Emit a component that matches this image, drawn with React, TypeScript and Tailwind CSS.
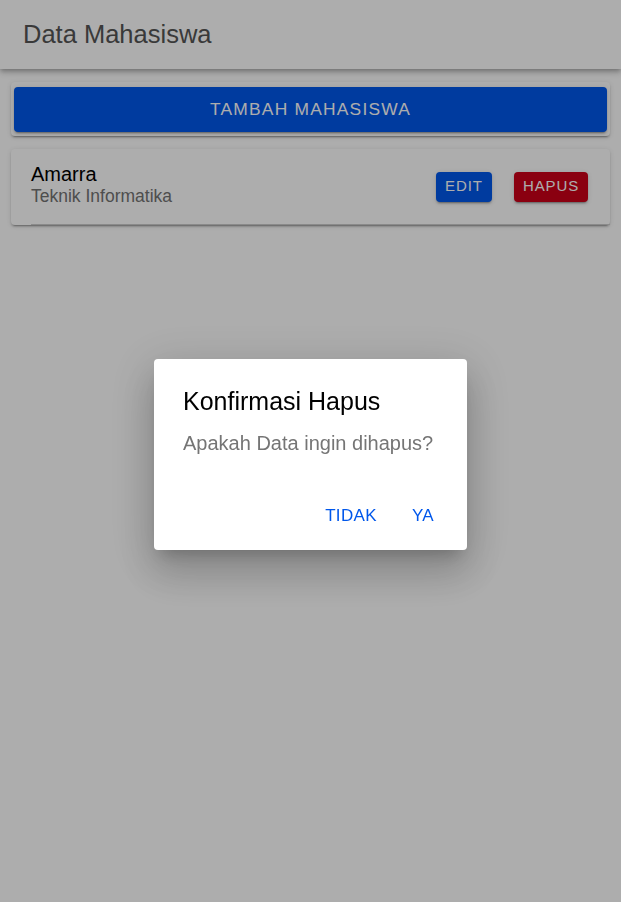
const font = { fontFamily: '"Liberation Sans", Arial, sans-serif' }

const App = () => {
  return (
    <div className="relative min-h-screen bg-white" style={font}>
      <header className="flex h-[69px] items-center bg-white pl-[23px] shadow-[0_2px_4px_-1px_rgba(0,0,0,0.2),0_4px_5px_0_rgba(0,0,0,0.14),0_1px_10px_0_rgba(0,0,0,0.12)]">
        <h1 className="text-[25.5px] text-[#555555]">Data Mahasiswa</h1>
      </header>

      <main className="flex flex-col gap-[13px] px-[11px] pt-[13px]">
        <div className="rounded-[4px] bg-white px-[3px] pb-[4px] pt-[5px] shadow-[0_3px_1px_-2px_rgba(0,0,0,0.2),0_2px_2px_0_rgba(0,0,0,0.14),0_1px_5px_0_rgba(0,0,0,0.12)]">
          <button className="h-[45px] w-full rounded-[4px] bg-[#0057eb] text-[17.4px] uppercase tracking-[0.07em] text-white shadow-[0_3px_1px_-2px_rgba(0,0,0,0.2),0_2px_2px_0_rgba(0,0,0,0.14),0_1px_5px_0_rgba(0,0,0,0.12)]">
            Tambah Mahasiswa
          </button>
        </div>

        <div className="rounded-[4px] bg-white shadow-[0_3px_1px_-2px_rgba(0,0,0,0.2),0_2px_2px_0_rgba(0,0,0,0.14),0_1px_5px_0_rgba(0,0,0,0.12)]">
          <div className="flex h-[76px] items-center pl-[20px]">
            <div className="flex h-full flex-1 items-center border-b border-[#cccccc] pr-[22px]">
              <div className="flex-1 pb-[4px]">
                <div className="text-[20px] leading-[23px] text-black">Amarra</div>
                <div className="text-[17.5px] leading-[21px] text-[#737373]">Teknik Informatika</div>
              </div>
              <div className="flex gap-[22px]">
                <button className="h-[30px] w-[56px] rounded-[4px] bg-[#0057eb] text-[15px] tracking-[0.06em] text-white shadow-[0_3px_1px_-2px_rgba(0,0,0,0.2),0_2px_2px_0_rgba(0,0,0,0.14),0_1px_5px_0_rgba(0,0,0,0.12)]">
                  EDIT
                </button>
                <button className="h-[30px] w-[74px] rounded-[4px] bg-[#cc0018] text-[15px] tracking-[0.06em] text-white shadow-[0_3px_1px_-2px_rgba(0,0,0,0.2),0_2px_2px_0_rgba(0,0,0,0.14),0_1px_5px_0_rgba(0,0,0,0.12)]">
                  HAPUS
                </button>
              </div>
            </div>
          </div>
        </div>
      </main>

      {/* backdrop + alert */}
      <div className="fixed inset-0 flex items-center justify-center bg-black/[0.32] pt-[7px]">
        <div className="w-[313px] rounded-[4px] bg-white shadow-[0_11px_15px_-7px_rgba(0,0,0,0.2),0_24px_38px_3px_rgba(0,0,0,0.14),0_9px_46px_8px_rgba(0,0,0,0.12)]">
          <div className="px-[29px] pt-[28px]">
            <h2 className="text-[25px] leading-[28px] text-black">Konfirmasi Hapus</h2>
            <p className="mt-[16px] text-[20px] leading-[24px] text-[#757575]">Apakah Data ingin dihapus?</p>
          </div>
          <div className="mt-[51px] flex justify-end gap-[11px] pb-[24px] pr-[21px]">
            <button className="px-[12px] text-[17px] leading-[20px] tracking-[0.02em] text-[#0057eb]">TIDAK</button>
            <button className="px-[12px] text-[17px] leading-[20px] tracking-[0.02em] text-[#0057eb]">YA</button>
          </div>
        </div>
      </div>
    </div>
  )
}

export default App
